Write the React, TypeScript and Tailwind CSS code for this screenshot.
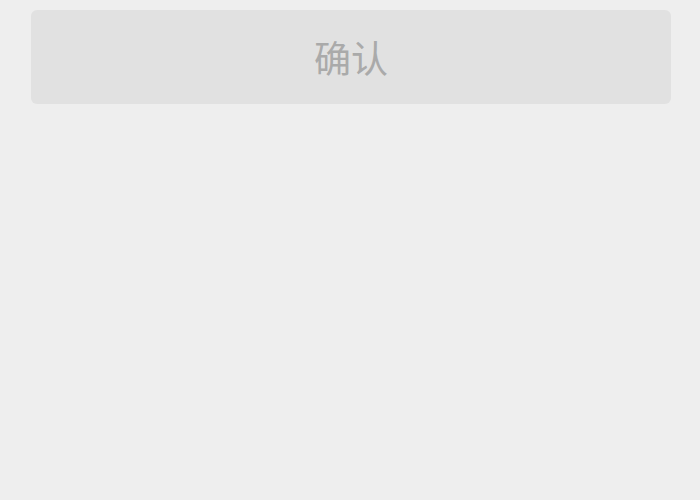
export default function App() {
  return (
    <div className="w-[700px] h-[500px] bg-[#eeeeee] pt-[10px]" style={{ fontFamily: '"Noto Sans CJK SC", "Noto Sans", sans-serif' }}>
      <button className="ml-[31px] w-[640px] h-[94px] rounded-[6px] bg-[#e1e1e1] flex items-center justify-center text-[37px] text-[#aaaaaa] leading-none">
        确认
      </button>
    </div>
  );
}
